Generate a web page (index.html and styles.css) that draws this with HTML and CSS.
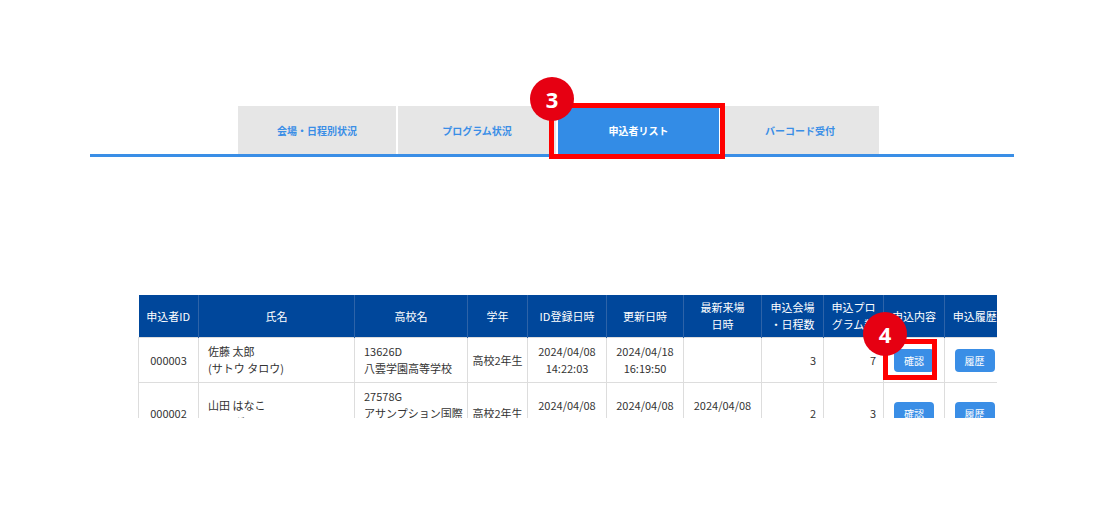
FILE: index.html
```html
<!DOCTYPE html>
<html lang="ja">
<head>
    <meta charset="UTF-8">
    <meta name="viewport" content="width=device-width, initial-scale=1.0">
    <title>申込者リスト</title>
    <link rel="stylesheet" href="styles.css">
</head>
<body>
<div class="tabs-area">
    <ul class="tabs">
        <li class="tab">会場・日程別状況</li>
        <li class="tab">プログラム状況</li>
        <li class="tab active">申込者リスト</li>
        <li class="tab">バーコード受付</li>
    </ul>
</div>

<div class="table-wrap">
    <table class="list">
        <colgroup>
            <col style="width:60px"><col style="width:156px"><col style="width:113px"><col style="width:60px">
            <col style="width:79px"><col style="width:77px"><col style="width:78px"><col style="width:62px">
            <col style="width:60px"><col style="width:61px"><col style="width:60px">
        </colgroup>
        <thead>
        <tr>
            <th>申込者ID</th>
            <th>氏名</th>
            <th>高校名</th>
            <th>学年</th>
            <th>ID登録日時</th>
            <th>更新日時</th>
            <th>最新来場<br>日時</th>
            <th>申込会場<br>・日程数</th>
            <th>申込プロ<br>グラム数</th>
            <th>申込内容</th>
            <th>申込履歴</th>
        </tr>
        </thead>
        <tbody>
        <tr>
            <td class="c">000003</td>
            <td>佐藤 太郎<br>(サトウ タロウ)</td>
            <td>13626D<br>八雲学園高等学校</td>
            <td class="c">高校2年生</td>
            <td class="c">2024/04/08<br>14:22:03</td>
            <td class="c">2024/04/18<br>16:19:50</td>
            <td class="c"></td>
            <td class="r">3</td>
            <td class="r">7</td>
            <td class="c"><button class="btn">確認</button></td>
            <td class="c"><button class="btn">履歴</button></td>
        </tr>
        <tr>
            <td class="c">000002</td>
            <td>山田 はなこ<br>(ヤマダ ハナコ)</td>
            <td class="clip">27578G<br>アサンプション国際<br>高等学校</td>
            <td class="c">高校2年生</td>
            <td class="c">2024/04/08<br>10:05:12</td>
            <td class="c">2024/04/08<br>10:05:12</td>
            <td class="c">2024/04/08<br>11:30:00</td>
            <td class="r">2</td>
            <td class="r">3</td>
            <td class="c"><button class="btn">確認</button></td>
            <td class="c"><button class="btn">履歴</button></td>
        </tr>
        </tbody>
    </table>
</div>

<!-- annotations -->
<div class="mark box3"></div>
<div class="num n3">3</div>
<div class="mark box4"></div>
<div class="num n4">4</div>
</body>
</html>
```

FILE: styles.css
```css
body {
    margin: 0;
    font-family: "Noto Sans CJK JP", "Noto Sans", sans-serif;
    background: #fff;
    color: #333;
    position: relative;
    height: 515px;
    overflow: hidden;
}
.tabs-area {
    margin: 106px 0 0 90px;
    width: 924px;
    border-bottom: 3px solid #3a8ee6;
}
.tabs {
    list-style: none;
    margin: 0 0 0 148px;
    padding: 0;
    display: flex;
}
.tab {
    width: 158px;
    height: 48px;
    margin-right: 2px;
    background: #e6e6e6;
    color: #3a8ee6;
    font-size: 10px;
    font-weight: bold;
    display: flex;
    align-items: center;
    justify-content: center;
}
.tab.active {
    background: #338ce6;
    color: #fff;
    width: 161px;
}
.table-wrap {
    margin: 138px 0 0 138px;
    width: 859px;
    height: 123px;
    overflow: hidden;
}
.list {
    border-collapse: collapse;
    table-layout: fixed;
    width: 866px;
    font-size: 11px;
    line-height: 17px;
}
.list th {
    background: #00479b;
    color: #fff;
    font-weight: normal;
    padding: 4px 2px;
    height: 34px;
    border-left: 1px solid #2d63a8;
    white-space: nowrap;
    overflow: hidden;
}
.list th:first-child {
    border-left: none;
}
.list td {
    padding: 5px 9px;
    border: 1px solid #dddddd;
    vertical-align: middle;
    white-space: nowrap;
    overflow: hidden;
}
.list td.c {
    text-align: center;
    padding: 5px 4px;
}
.list td.r {
    text-align: right;
    padding: 5px 7px;
}
.list td.clip {
    padding-right: 0;
}
.btn {
    font-family: inherit;
    width: 40px;
    height: 23px;
    border: none;
    border-radius: 4px;
    background: #3a8ee6;
    color: #fff;
    font-size: 10px;
    padding: 0;
    vertical-align: middle;
}
.mark {
    position: absolute;
    border: 5px solid #ff0000;
    box-sizing: border-box;
}
.box3 {
    left: 549px;
    top: 103px;
    width: 176px;
    height: 56px;
}
.box4 {
    left: 883px;
    top: 339px;
    width: 54px;
    height: 41px;
}
.num {
    position: absolute;
    width: 44px;
    height: 44px;
    border-radius: 50%;
    background: #e60012;
    color: #fff;
    font-family: "Noto Sans", sans-serif;
    font-weight: bold;
    font-size: 22px;
    line-height: 44px;
    text-align: center;
}
.n3 {
    left: 530px;
    top: 77px;
}
.n4 {
    left: 863px;
    top: 312px;
}
```
